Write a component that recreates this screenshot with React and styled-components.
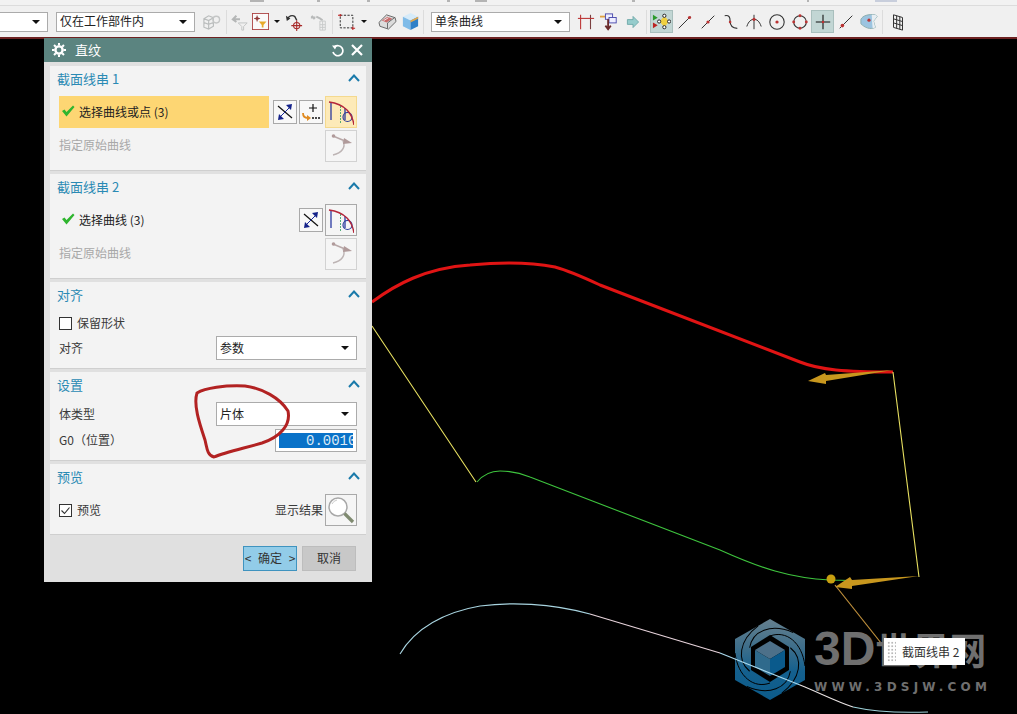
import React from "react";
import styled, { createGlobalStyle } from "styled-components";

const font = `"Noto Sans CJK SC", "Liberation Sans", sans-serif`;

const Global = createGlobalStyle`
  html, body {
    margin: 0;
    padding: 0;
    background: #000;
    overflow: hidden;
  }
`;

/* ---------- toolbar icons ---------- */
const Ic = ({ children, size = 18 }) => (
  <svg width={size} height={size} viewBox="0 0 20 20" fill="none">{children}</svg>
);

const DimBox = () => (
  <Ic size={19}>
    <path d="M2 7l5-3 5 2v9l-5 3-5-2zM7 9v9M2 7l5 2 5-3M2 11l5 2 5-2" stroke="#b9bcbc" strokeWidth="1.200" />
    <circle cx="15" cy="8" r="3.500" stroke="#c4c6c6" strokeWidth="1.500" />
  </Ic>
);
const DimFilter = () => (
  <Ic>
    <path d="M2 7h8M6 3L2 7l4 3" stroke="#b4b6b6" strokeWidth="2.200" />
    <path d="M8 11h10l-4 4v4h-2v-4z" stroke="#c0c2c2" strokeWidth="1" />
  </Ic>
);
const FilterBox = () => (
  <Ic size={17}>
    <rect x="0.500" y="0.500" width="19" height="19" fill="#fafafa" stroke="#a83a3a" />
    <path d="M6 3v7M2.500 6.500h7" stroke="#8a2a2a" strokeWidth="1" />
    <circle cx="6" cy="6.500" r="1.600" stroke="#8a2a2a" />
    <path d="M8 10h9l-3.500 4v3h-2v-3z" fill="#e8aa2a" />
  </Ic>
);
const UndoTarget = () => (
  <Ic>
    <path d="M3 7a5 5 0 0 1 8-3l2 4" stroke="#333" strokeWidth="1.600" />
    <path d="M1 3l1 6 4-3z" fill="#333" />
    <circle cx="13" cy="14" r="3.500" stroke="#a82a2a" strokeWidth="1.200" />
    <path d="M13 8v12M7 14h12" stroke="#a82a2a" strokeWidth="1.200" />
  </Ic>
);
const DimGrid = () => (
  <Ic>
    <path d="M1 5h5M2 3l3 4M7 4l4 2 3 2" stroke="#b8baba" strokeWidth="2" />
    <path d="M11 9h6v10h-6zM11 13h6M11 16h6M14 9v10" stroke="#c6c8c8" strokeWidth="1" />
  </Ic>
);
const DashRect = () => (
  <Ic>
    <rect x="2.500" y="2.500" width="14" height="14" stroke="#333" strokeWidth="1.100" strokeDasharray="2.500 1.500" />
    <path d="M0 2.500h4M2.500 1v3M15 17h4M16.500 15v4" stroke="#b22" strokeWidth="1.200" />
  </Ic>
);
const Eraser = () => (
  <Ic size={19}>
    <path d="M1 11l8-8 9 3 1 4-8 8-9-3z" fill="#dcdcdc" stroke="#666" />
    <path d="M4 9l6-4 5 2-6 4z" fill="#c96a6a" />
    <path d="M10 17.500v-6l8-6" stroke="#666" />
    <path d="M6 9l5-3" stroke="#eee" />
  </Ic>
);
const CubeBlue = () => (
  <Ic size={19}>
    <path d="M2 5l8-4 8 4-8 4z" fill="#d6ebf9" />
    <path d="M2 5l8 4v10l-8-4z" fill="#7fbbe8" />
    <path d="M18 5l-8 4v10l8-4z" fill="#2f7fc7" />
    <path d="M10 9l8-4v2l-8 4z" fill="#e0a850" />
  </Ic>
);
const Posts = () => (
  <Ic>
    <path d="M4 2v16" stroke="#b33" strokeWidth="1.200" />
    <path d="M15 2v16" stroke="#7a4040" strokeWidth="1.200" />
    <path d="M1 6h18" stroke="#b33" strokeWidth="1.200" />
  </Ic>
);
const Assembly = () => (
  <Ic>
    <path d="M0 4h7" stroke="#e0a040" strokeWidth="2" />
    <rect x="6" y="1" width="8" height="6" fill="#eef" stroke="#44a" />
    <rect x="10" y="5" width="8" height="6" fill="#eef" stroke="#44a" />
    <path d="M9 7v10M6 14l3 4 3-4" stroke="#6a2a2a" strokeWidth="2" />
  </Ic>
);
const ArrowRight = () => (
  <Ic size={16}>
    <path d="M3 7h7V3l7 7-7 7v-4H3z" fill="#96cccc" stroke="#64a2a2" />
  </Ic>
);
const SnapAll = () => (
  <Ic size={19}>
    <path d="M1 3l5 3-5 3z" fill="#2a9a2a" />
    <path d="M1 11l5 3-5 3z" fill="#b22" />
    <path d="M13 4l5 6-5 6-5-6z" fill="#f0d040" />
    <circle cx="13" cy="4" r="1.700" fill="#fff" stroke="#222" />
    <circle cx="13" cy="16" r="1.700" fill="#fff" stroke="#222" />
    <circle cx="7.500" cy="10" r="1.700" fill="#fff" stroke="#222" />
    <circle cx="18" cy="10" r="1.700" fill="#fff" stroke="#222" />
  </Ic>
);
const LineEnd = () => (
  <Ic>
    <path d="M3 17L16 4" stroke="#333" strokeWidth="1.100" />
    <circle cx="15" cy="5" r="1.800" fill="#b33" />
  </Ic>
);
const LineMid = () => (
  <Ic>
    <path d="M3 17L17 3" stroke="#333" strokeWidth="1.100" />
    <circle cx="10" cy="10" r="1.800" fill="#b33" />
  </Ic>
);
const Scurve = () => (
  <Ic>
    <path d="M3 3c5-1 6 2 6 6s1 8 8 8" stroke="#333" strokeWidth="1.300" />
    <circle cx="9" cy="10" r="1.400" fill="#b33" />
  </Ic>
);
const Intersect = () => (
  <Ic>
    <path d="M2 15c2-6 5-8 8-8s6 2 8 8M10 2v16" stroke="#333" strokeWidth="1.100" />
    <circle cx="10" cy="7" r="1.800" fill="#b33" />
  </Ic>
);
const Center = () => (
  <Ic>
    <circle cx="10" cy="10" r="8" stroke="#333" strokeWidth="1.200" />
    <circle cx="10" cy="10" r="1.800" fill="#b33" />
  </Ic>
);
const Quadrant = () => (
  <Ic>
    <circle cx="10" cy="10" r="7" stroke="#333" strokeWidth="1.200" />
    <circle cx="10" cy="3" r="1.600" fill="#b33" />
    <circle cx="10" cy="17" r="1.600" fill="#b33" />
    <circle cx="3" cy="10" r="1.600" fill="#b33" />
    <circle cx="17" cy="10" r="1.600" fill="#b33" />
  </Ic>
);
const Cross = () => (
  <Ic>
    <path d="M10 2v16M2 10h16" stroke="#111" strokeWidth="1.200" />
    <circle cx="10" cy="10" r="1.400" fill="#b33" />
  </Ic>
);
const LineLow = () => (
  <Ic>
    <path d="M3 17L17 3" stroke="#333" strokeWidth="1.100" />
    <circle cx="6" cy="14" r="2" fill="#b33" />
  </Ic>
);
const Surface = () => (
  <Ic>
    <path d="M1 7c2-4 8-6 16-5l2 2-4 5 2 7c-6 3-12 0-16-4z" fill="#9cc4e0" stroke="#8aa" />
    <path d="M13 2l4 0 2 2-4 5 2 7-3 1z" fill="#e8eef2" />
    <circle cx="10" cy="8" r="1.800" fill="#b33" />
  </Ic>
);
const GridCube = () => (
  <Ic>
    <path d="M5 2l10 3v14l-10-3zM5 6.500l10 3M5 11l10 3M8.500 3v14M12 4v14" stroke="#333" strokeWidth="1.100" />
  </Ic>
);

/* ---------- dialog icons ---------- */
const Check = () => (
  <svg width="14" height="12" viewBox="0 0 14 12">
    <path d="M1 6l2.500-1.500L5.500 7 12 0.500 13.500 2 5.500 11.500z" fill="#2fb52f" />
  </svg>
);
const ReverseIcon = () => (
  <svg width="18" height="18" viewBox="0 0 18 18" fill="none">
    <path d="M2 3l14 12" stroke="#111" strokeWidth="1.200" />
    <path d="M15 3L3 15" stroke="#1a2a9a" strokeWidth="1" />
    <path d="M16 1l-1 6-5-5zM2 17l1-6 5 5z" fill="#14228a" />
  </svg>
);
const AddIcon = () => (
  <svg width="18" height="18" viewBox="0 0 18 18" fill="none">
    <path d="M11 1v8M7 5h8" stroke="#111" strokeWidth="1.200" />
    <path d="M1 10c0 4 2 5 5 5" stroke="#e08a20" strokeWidth="1.800" />
    <path d="M5 12v6l4-3z" fill="#e08a20" />
    <path d="M10 15h2M13 15h2M16 15h2" stroke="#111" strokeWidth="1.600" />
  </svg>
);
const CurveRule = () => (
  <svg width="26" height="26" viewBox="0 0 26 26" fill="none">
    <path d="M3 3v18M17 9v12" stroke="#1a2a9a" strokeWidth="1.200" />
    <path d="M12.500 7v18" stroke="#2a9a5a" strokeWidth="0.800" strokeDasharray="2 1" />
    <circle cx="19.500" cy="18" r="4.500" stroke="#2a3a9a" strokeWidth="1.200" />
    <path d="M1 3c8 1 14 4 18 8s6 9 7 15" stroke="#b3263a" strokeWidth="1.400" />
  </svg>
);
const OriginCurve = () => (
  <svg width="26" height="26" viewBox="0 0 26 26" fill="none">
    <path d="M5 3l12 5" stroke="#b8a8a8" strokeWidth="1.400" />
    <path d="M15 8c3 6-1 12-10 14" stroke="#bdb4b4" strokeWidth="1.400" />
    <circle cx="5.500" cy="3" r="1.800" fill="#b09a9a" />
    <path d="M16 5l8 5-9 1z" fill="#b09a9a" />
  </svg>
);
const Magnifier = () => (
  <svg width="28" height="28" viewBox="0 0 28 28" fill="none">
    <circle cx="11" cy="11" r="9" fill="#fff" stroke="#a8a8a8" strokeWidth="1.500" />
    <path d="M17.500 17.500L26 26" stroke="#7f8a70" strokeWidth="3.200" />
    <path d="M5 8a7 7 0 0 1 5-4" stroke="#ccc" />
  </svg>
);
const Gear = () => (
  <svg width="14" height="14" viewBox="0 0 14 14" fill="none">
    <circle cx="7" cy="7" r="3.600" stroke="#fff" strokeWidth="2.400" />
    <path d="M7 0v2.500M7 11.500V14M0 7h2.500M11.500 7H14M2 2l1.800 1.800M10.200 10.200L12 12M12 2l-1.800 1.800M3.800 10.200L2 12" stroke="#fff" strokeWidth="2" />
  </svg>
);
const Reset = () => (
  <svg width="13" height="13" viewBox="0 0 13 13" fill="none">
    <path d="M3.500 3a5 5 0 1 1-1.500 5" stroke="#fff" strokeWidth="1.700" />
    <path d="M1 1.500h5l-2 4z" fill="#fff" />
  </svg>
);
const Close = () => (
  <svg width="12" height="12" viewBox="0 0 12 12" fill="none">
    <path d="M1 1l10 10M11 1L1 11" stroke="#fff" strokeWidth="2.200" />
  </svg>
);
const Chevron = () => (
  <svg width="12" height="8" viewBox="0 0 12 8" fill="none">
    <path d="M1 7l5-5.500L11 7" stroke="#1a7aaa" strokeWidth="2" />
  </svg>
);

/* ---------- page ---------- */
const Page = styled.div`
  position: relative;
  width: 1017px;
  height: 714px;
  overflow: hidden;
  background: #000;
  font-family: ${font};
`;

const TopStrip = styled.div`
  display: flex;
  align-items: flex-start;
  height: 5px;
  background: #f2f2f2;
  border-bottom: 1px solid #dcdcdc;
`;

const StripMark = styled.span`
  flex: none;
  width: ${(p) => p.$w}px;
  height: 2px;
  margin-left: ${(p) => p.$ml}px;
  background: ${(p) => p.$c || "#b4b4b4"};
`;

const Toolbar = styled.div`
  display: flex;
  align-items: center;
  height: 31px;
  background: #f0f0f0;
  border-bottom: 2px solid #6e2222;
`;

const Select = styled.div`
  box-sizing: border-box;
  display: flex;
  align-items: center;
  justify-content: space-between;
  width: ${(p) => p.$w}px;
  height: ${(p) => p.$h || 20}px;
  margin-left: ${(p) => p.$ml || 0}px;
  padding: 0 7px 2px 3px;
  background: #fff;
  border: 1px solid #ababab;
  border-left-width: ${(p) => (p.$cut ? 0 : 1)}px;
  font-size: 12px;
  color: #222;
  flex: none;
`;

const Caret = styled.span`
  width: 0;
  height: 0;
  margin-top: 2px;
  border-left: 4px solid transparent;
  border-right: 4px solid transparent;
  border-top: 4px solid #111;
`;

const SmallCaret = styled(Caret)`
  margin: 0 ${(p) => p.$mr || 0}px 0 ${(p) => p.$ml || 0}px;
  border-left-width: 3px;
  border-right-width: 3px;
  border-top-width: 3px;
  flex: none;
`;

const ToolIcon = styled.div`
  box-sizing: border-box;
  flex: none;
  display: flex;
  align-items: center;
  justify-content: center;
  width: ${(p) => p.$w || 23}px;
  height: 23px;
  margin-left: ${(p) => p.$ml || 0}px;
  background: ${(p) => (p.$on ? "#c2d6d4" : "transparent")};
  border: 1px solid ${(p) => (p.$on ? "#a9bfbd" : "transparent")};
`;

const Sep = styled.span`
  flex: none;
  width: 1px;
  height: 24px;
  margin-left: ${(p) => p.$ml || 0}px;
  background: #dcdcdc;
`;

const Dialog = styled.div`
  position: absolute;
  left: 44px;
  top: 38px;
  width: 328px;
  height: 544px;
  background: #e0e0e0;
  color: #333;
  font-size: 12px;
`;

const TitleBar = styled.div`
  display: flex;
  align-items: center;
  box-sizing: border-box;
  height: 24px;
  padding: 0 9px 0 8px;
  background: #5b8480;
  color: #fff;
  font-size: 13px;
`;

const TitleText = styled.span`
  margin: 0 0 2px 9px;
  flex: 1;
`;

const TitleTools = styled.div`
  display: flex;
  align-items: center;
  gap: 7px;
`;

const Sections = styled.div`
  display: flex;
  flex-direction: column;
  gap: 4px;
  padding: 4px 6px 0;
`;

const Section = styled.section`
  display: flex;
  flex-direction: column;
  gap: ${(p) => p.$gap ?? 2}px;
  padding: 0 9px 8px;
  background: #f3f3f3;
  box-shadow: 0 1px 0 #cfcfcf;
`;

const SectionHead = styled.div`
  display: flex;
  align-items: center;
  justify-content: space-between;
  height: 30px;
  margin: 0 -3px ${(p) => -(p.$gap ?? 2)}px -2px;
  color: #2a8ab4;
  font-size: 13px;
  padding-bottom: 6px;
  box-sizing: border-box;
`;

const Row = styled.div`
  display: flex;
  align-items: center;
  height: ${(p) => p.$h || 32}px;
  gap: 2px;
`;

const PickRow = styled(Row)`
  flex: 1;
  height: 100%;
  gap: 4px;
  box-sizing: border-box;
  padding: 0 0 2px 2px;
  background: ${(p) => (p.$active ? "#fdd673" : "transparent")};
  color: #222;
  margin-right: 2px;
`;

const Dim = styled.span`
  flex: 1;
  padding-bottom: 3px;
  color: #a8a8a8;
`;

const Label = styled.span`
  flex: ${(p) => (p.$grow ? 1 : "none")};
  padding-bottom: 2px;
  color: #3a3a3a;
`;

const SmallBtn = styled.button`
  box-sizing: border-box;
  display: flex;
  align-items: center;
  justify-content: center;
  width: 24px;
  height: 24px;
  padding: 0;
  background: #f8f8f8;
  border: 1px solid #a9a9a9;
`;

const BigBtn = styled.button`
  box-sizing: border-box;
  display: flex;
  align-items: center;
  justify-content: center;
  width: 32px;
  height: 32px;
  padding: 0;
  flex: none;
  background: ${(p) => (p.$active ? "#fdeab8" : "#f5f5f5")};
  border: 1px solid ${(p) => (p.$active ? "#f4d98e" : p.$dim ? "#d2d2d2" : "#a9a9a9")};
`;

const CheckBox = styled.span`
  box-sizing: border-box;
  display: flex;
  align-items: center;
  justify-content: center;
  width: 13px;
  height: 13px;
  margin-right: 3px;
  background: #fff;
  border: 1px solid #333;
  flex: none;
`;

const NumberBox = styled.div`
  box-sizing: border-box;
  width: 82px;
  height: 23px;
  padding: 3px;
  background: #fff;
  border: 1px solid #ababab;
`;

const NumberFill = styled.div`
  height: 100%;
  overflow: hidden;
  white-space: nowrap;
  background: #0a72c8;
  color: #dceaf6;
  font-family: "Liberation Mono", monospace;
  font-size: 14px;
  line-height: 17px;
  padding-left: 27px;
`;

const Footer = styled.div`
  display: flex;
  justify-content: flex-end;
  gap: 5px;
  padding: 12px 16px 0 0;
`;

const FooterBtn = styled.button`
  box-sizing: border-box;
  width: 54px;
  height: 25px;
  padding: 0 0 2px;
  font-family: ${font};
  font-size: 12px;
  word-spacing: 4px;
  color: #333;
  background: ${(p) => (p.$primary ? "#92cce8" : "#c8c8c8")};
  border: 1px solid ${(p) => (p.$primary ? "#3f93bf" : "#bdbdbd")};
`;

const Drawing = styled.svg`
  position: absolute;
  left: 0;
  top: 0;
  pointer-events: none;
`;

const Watermark = styled.div`
  position: absolute;
  left: 814px;
  top: 624px;
  width: 180px;
  color: #6f6f6f;
`;

const BrandName = styled.div`
  font-family: "Liberation Sans", "Noto Sans CJK SC", sans-serif;
  font-weight: 700;
  font-size: 48px;
  line-height: 50px;
  white-space: nowrap;
`;

const BrandCjk = styled.span`
  font-size: 37px;
`;

const BrandUrl = styled.div`
  margin-top: 1px;
  font-family: "DejaVu Sans", sans-serif;
  font-weight: 700;
  font-size: 12px;
  line-height: 16px;
  letter-spacing: 4.200px;
  white-space: nowrap;
`;

const Tag = styled.div`
  position: absolute;
  left: 884px;
  top: 638px;
  width: 81px;
  height: 27px;
  display: flex;
  align-items: center;
  background: #fff;
  color: #333;
  font-size: 12px;
  white-space: nowrap;
`;

const Grip = styled.span`
  width: 9px;
  height: 22px;
  margin: 0 6px 0 3px;
  background: radial-gradient(circle, #b8b8b8 1px, transparent 1.200px) 0 0 / 3.500px 3.500px;
`;

const SelectRowTwo = ({ value, w = 141 }) => (
  <Select $w={w} $h={24}>
    {value}
    <Caret />
  </Select>
);

const StringSection = ({ title, first, active, extra }) => (
  <Section>
    <SectionHead>
      {title}
      <Chevron />
    </SectionHead>
    <Row>
      <PickRow $active={active}>
        <Check />
        {first}
      </PickRow>
      <SmallBtn><ReverseIcon /></SmallBtn>
      {extra && <SmallBtn><AddIcon /></SmallBtn>}
      <BigBtn $active={active}><CurveRule /></BigBtn>
    </Row>
    <Row>
      <Dim>指定原始曲线</Dim>
      <BigBtn $dim><OriginCurve /></BigBtn>
    </Row>
  </Section>
);

const App = () => (
  <Page>
    <Global />
    <TopStrip>
      <StripMark $w={14} $ml={250} />
      <StripMark $w={3} $ml={53} />
      <StripMark $w={3} $ml={47} />
      <StripMark $w={3} $ml={77} />
      <StripMark $w={12} $ml={25} />
      <StripMark $w={3} $ml={145} />
      <StripMark $w={2} $ml={172} />
      <StripMark $w={22} $ml={66} $c="#c8cedc" />
    </TopStrip>
    <Toolbar>
      <Select $w={48} $cut><span /><Caret /></Select>
      <Select $w={139} $ml={8}>仅在工作部件内<Caret /></Select>
      <ToolIcon $ml={5}><DimBox /></ToolIcon>
      <Sep $ml={3} />
      <ToolIcon $ml={3} $w={20}><DimFilter /></ToolIcon>
      <ToolIcon $w={20}><FilterBox /></ToolIcon>
      <SmallCaret $ml={4} $mr={4} />
      <ToolIcon $w={20}><UndoTarget /></ToolIcon>
      <ToolIcon $ml={3}><DimGrid /></ToolIcon>
      <Sep $ml={2} />
      <ToolIcon $ml={2}><DashRect /></ToolIcon>
      <SmallCaret $ml={3} $mr={9} />
      <ToolIcon><Eraser /></ToolIcon>
      <ToolIcon><CubeBlue /></ToolIcon>
      <Sep $ml={1} />
      <Select $w={139} $ml={7}>单条曲线<Caret /></Select>
      <ToolIcon $ml={4}><Posts /></ToolIcon>
      <ToolIcon><Assembly /></ToolIcon>
      <ToolIcon $ml={1}><ArrowRight /></ToolIcon>
      <Sep $ml={2} />
      <ToolIcon $ml={3} $on><SnapAll /></ToolIcon>
      <ToolIcon><LineEnd /></ToolIcon>
      <ToolIcon><LineMid /></ToolIcon>
      <ToolIcon><Scurve /></ToolIcon>
      <ToolIcon><Intersect /></ToolIcon>
      <ToolIcon><Center /></ToolIcon>
      <ToolIcon><Quadrant /></ToolIcon>
      <ToolIcon $on><Cross /></ToolIcon>
      <ToolIcon><LineLow /></ToolIcon>
      <ToolIcon><Surface /></ToolIcon>
      <Sep $ml={2} />
      <ToolIcon $ml={3}><GridCube /></ToolIcon>
    </Toolbar>

    <Drawing width="1017" height="714" viewBox="0 0 1017 714" fill="none">
      <defs>
        <linearGradient id="hex" x1="0" y1="0" x2="0" y2="1">
          <stop offset="0" stopColor="#65808f" />
          <stop offset="0.35" stopColor="#3e6e8a" />
          <stop offset="0.65" stopColor="#14608e" />
          <stop offset="1" stopColor="#0c5b8a" />
        </linearGradient>
      </defs>
      <path d="M372 302C395 285 425 268 470 265C500 262 530 262 555 267C570 271 585 278 600 285L800 362C820 370 845 372 893 372" stroke="#e01414" strokeWidth="3" />
      <path d="M372 326L476 482M893 372L919 577" stroke="#e8e060" strokeWidth="1.100" />
      <path d="M477 482C482 476 490 471 500 471C510 471 518 472 530 477L720 550C760 568 790 578 830 580L870 581" stroke="#3ec43e" strokeWidth="1.100" />
      <path d="M893 370L826 375L825 373L808 381L826 384L826 381Z" fill="#c8971e" />
      <path d="M919 576L852 580L850 577L835 587L852 589L852 586Z" fill="#c8971e" />
      <path d="M835 585L885 648" stroke="#c0903c" strokeWidth="1.200" />
      <circle cx="831" cy="579" r="4.500" fill="#c8a010" />
      <g>
        <path d="M770 619L805 639V680L770 700L735 680V639Z" fill="url(#hex)" />
        {[0, 60, 120, 180, 240, 300].map((a) => (
          <path
            key={a}
            d="M770 636C786 630 802 642 805 666"
            stroke="#000"
            strokeWidth="1"
            transform={`rotate(${a} 770 659.500)`}
          />
        ))}
        <path d="M770 635L789 647V670L770 682L751 670V647Z" fill="#000" />
        <path d="M770 641L785 650L770 659L755 650Z" fill="#4d7089" />
        <path d="M755 650L770 659V676L755 667Z" fill="#2f6a8c" />
        <path d="M785 650L770 659V676L785 667Z" fill="#0a5a8c" />
      </g>
      <path d="M400 654C415 628 445 612 480 606C510 602 550 603 590 614" stroke="#a8d4e0" strokeWidth="1.100" />
      <path d="M590 614L720 653" stroke="#e8d4dc" strokeWidth="1.100" />
      <path d="M720 653L800 685" stroke="#a8d8ec" strokeWidth="1.200" />
      <path d="M800 685C820 693 835 701 853 707" stroke="#eae4e4" strokeWidth="1.100" />
      <path d="M853 707C875 712 900 713 928 712" stroke="#9cd0d8" strokeWidth="1.100" />
    </Drawing>

    <Watermark>
      <BrandName>3D<BrandCjk>世界网</BrandCjk></BrandName>
      <BrandUrl>WWW.3DSJW.COM</BrandUrl>
    </Watermark>
    <Tag><Grip />截面线串 2</Tag>

    <Dialog>
      <TitleBar>
        <Gear />
        <TitleText>直纹</TitleText>
        <TitleTools><Reset /><Close /></TitleTools>
      </TitleBar>
      <Sections>
        <StringSection title="截面线串 1" first="选择曲线或点 (3)" active extra />
        <StringSection title="截面线串 2" first="选择曲线 (3)" />
        <Section>
          <SectionHead>对齐<Chevron /></SectionHead>
          <Row $h={22}>
            <CheckBox />
            <Label>保留形状</Label>
          </Row>
          <Row $h={24}>
            <Label $grow>对齐</Label>
            <SelectRowTwo value="参数" />
          </Row>
        </Section>
        <Section $gap={3}>
          <SectionHead $gap={3}>设置<Chevron /></SectionHead>
          <Row $h={24}>
            <Label $grow>体类型</Label>
            <SelectRowTwo value="片体" />
          </Row>
          <Row $h={23}>
            <Label $grow>G0（位置）</Label>
            <NumberBox><NumberFill>0.0010</NumberFill></NumberBox>
          </Row>
        </Section>
        <Section>
          <SectionHead>预览<Chevron /></SectionHead>
          <Row>
            <CheckBox>
              <svg width="11" height="11" viewBox="0 0 11 11" fill="none">
                <path d="M1.500 5.500l3 3 5-6" stroke="#333" strokeWidth="1.100" />
              </svg>
            </CheckBox>
            <Label $grow>预览</Label>
            <Label>显示结果</Label>
            <BigBtn><Magnifier /></BigBtn>
          </Row>
        </Section>
      </Sections>
      <Footer>
        <FooterBtn $primary>&lt; 确定 &gt;</FooterBtn>
        <FooterBtn>取消</FooterBtn>
      </Footer>
    </Dialog>

    <Drawing width="1017" height="714" viewBox="0 0 1017 714" fill="none">
      <path d="M197 393C205 388 225 385 245 386C262 388 280 398 288 411C291 425 280 437 262 443C245 448 225 452 214 457C207 455 207 448 205 440C200 425 193 405 197 393Z" stroke="#b22222" strokeWidth="3" />
    </Drawing>
  </Page>
);

export default App;
